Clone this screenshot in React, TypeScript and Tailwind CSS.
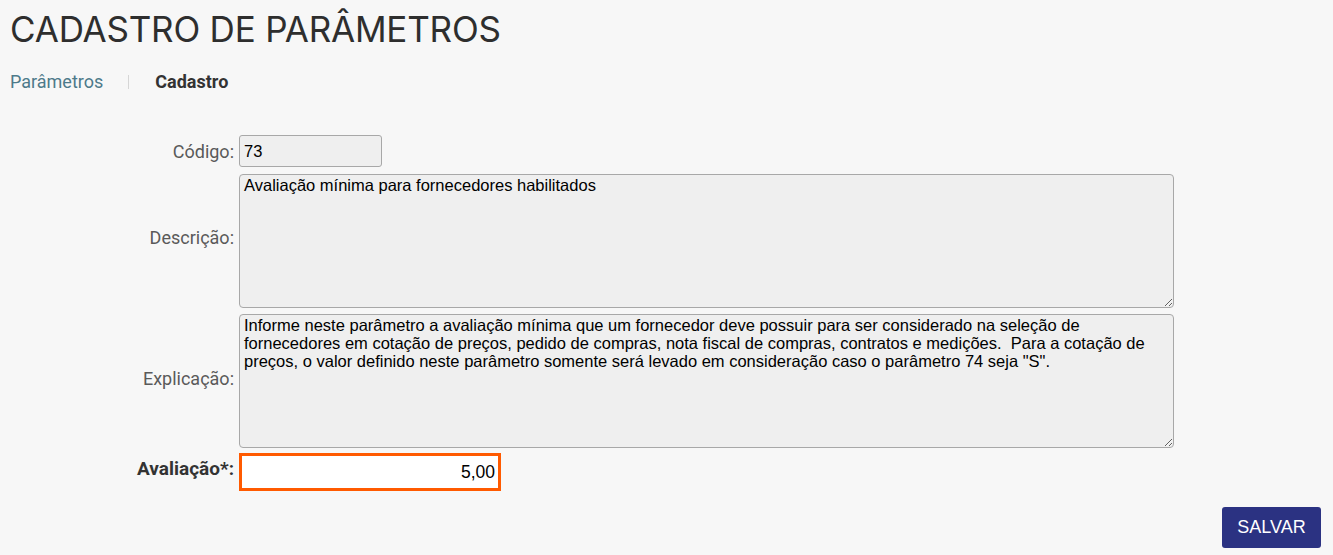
import { useState } from "react";

const explicacao =
  'Informe neste parâmetro a avaliação mínima que um fornecedor deve possuir para ser considerado na seleção de fornecedores em cotação de preços, pedido de compras, nota fiscal de compras, contratos e medições.  Para a cotação de preços, o valor definido neste parâmetro somente será levado em consideração caso o parâmetro 74 seja "S".';

function Label(props: { text: string; strong?: boolean }) {
    const { text, strong } = props;
    return (
        <div
            className={`flex items-center justify-end font-['Roboto',sans-serif] ${
                strong ? "text-[19px] font-bold text-[#333333]" : "text-[18px] text-[#5a5a5a]"
            }`}
        >
            {text}
        </div>
    );
}

function App() {
    const [avaliacao, setAvaliacao] = useState("5,00");

    return (
        <div className="min-h-[555px] w-full bg-[#f7f7f7] font-['Roboto',sans-serif]">
            <div className="px-[10px] pt-[9px]">
                <h1 className="font-['Inter',sans-serif] text-[35px] leading-[40px] text-[#2e2e2e] tracking-[-0.2px]">
                    CADASTRO DE PARÂMETROS
                </h1>
                <div className="mt-[22px] flex items-center text-[18px] leading-[22px]">
                    <span className="text-[#4d7a8a]">Parâmetros</span>
                    <span className="ml-[25px] mr-[26px] h-[14px] w-[1px] bg-[#d6d6d6]"></span>
                    <span className="font-bold text-[#333333]">Cadastro</span>
                </div>
            </div>

            <div className="mt-[42px] grid grid-cols-[234px_935px] gap-x-[5px]">
                <Label text="Código:" />
                <div>
                    <input
                        readOnly
                        value="73"
                        className="block h-[32px] w-[143px] rounded-[3px] border border-[#a8a8a8] bg-[#efefef] px-[4px] font-['Liberation_Sans',sans-serif] text-[16.5px] text-black outline-none"
                    />
                </div>

                <Label text="Descrição:" />
                <div className="pt-[7px]">
                    <textarea
                        readOnly
                        value="Avaliação mínima para fornecedores habilitados"
                        className="block h-[134px] w-[935px] resize-y rounded-[4px] border border-[#a8a8a8] bg-[#efefef] px-[4px] py-[1px] font-['Liberation_Sans',sans-serif] text-[16.5px] leading-[18px] text-black outline-none"
                    />
                </div>

                <Label text="Explicação:" />
                <div className="pt-[6px]">
                    <textarea
                        readOnly
                        value={explicacao}
                        className="block h-[134px] w-[935px] resize-y rounded-[4px] border border-[#a8a8a8] bg-[#efefef] px-[4px] py-[1px] font-['Liberation_Sans',sans-serif] text-[16.5px] leading-[18px] text-black outline-none"
                    />
                </div>

                <Label text="Avaliação*:" strong />
                <div className="pt-[5px]">
                    <input
                        value={avaliacao}
                        onChange={(e) => setAvaliacao(e.target.value)}
                        className="block h-[38px] w-[262px] border-[3px] border-[#ff5a00] bg-white px-[3px] text-right font-['Liberation_Sans',sans-serif] text-[17.5px] text-black outline-none"
                    />
                </div>
            </div>

            <div className="mt-[16px] flex justify-end pr-[12px]">
                <button className="h-[41px] w-[99px] rounded-[3px] bg-[#2b3282] font-['Liberation_Sans',sans-serif] text-[18px] text-white">
                    SALVAR
                </button>
            </div>
        </div>
    );
}

export default App;
